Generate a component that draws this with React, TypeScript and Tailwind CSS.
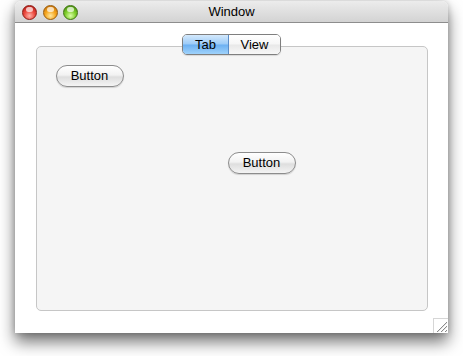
import React from 'react';

const font = { fontFamily: '"Liberation Sans", Arial, sans-serif' };

function Light({ tone }: { tone: 'red' | 'amber' | 'green' }) {
  const fills = {
    red: 'bg-[radial-gradient(circle_at_50%_75%,#ffb4aa_0%,#ec4a40_45%,#a8120c_100%)] border-[#8e1a14]',
    amber: 'bg-[radial-gradient(circle_at_50%_75%,#ffe8a0_0%,#f6a61e_45%,#b86406_100%)] border-[#9a5c0a]',
    green: 'bg-[radial-gradient(circle_at_50%_75%,#dcffa8_0%,#80ce2c_45%,#3a7e08_100%)] border-[#3f7410]',
  };
  return (
    <div className={`relative h-[15px] w-[15px] rounded-full border ${fills[tone]}`}>
      <div className="absolute left-[3px] top-[1px] h-[5px] w-[7px] rounded-full bg-white/70" />
    </div>
  );
}

function AquaButton({ className = '' }: { className?: string }) {
  return (
    <div
      className={`flex h-[22px] w-[68px] items-center justify-center rounded-full border border-[#8c8c8c] bg-[linear-gradient(to_bottom,#ffffff_0%,#f2f2f2_45%,#dedede_55%,#f4f4f4_100%)] text-[13px] text-black shadow-[0_1px_1px_rgba(0,0,0,0.15)] ${className}`}
    >
      Button
    </div>
  );
}

export default function App() {
  return (
    <div className="h-[356px] w-[463px] bg-white pl-[15px] pt-[1px]" style={font}>
      <div className="relative flex h-[332px] w-[433px] flex-col rounded-t-[6px] bg-white shadow-[0_9px_16px_rgba(0,0,0,0.55),0_0_6px_rgba(0,0,0,0.2)]">
        <div className="relative flex h-[22px] items-center rounded-t-[6px] border-b border-[#8d8d8d] bg-[linear-gradient(to_bottom,#ececec,#d3d3d3)]">
          <div className="flex items-center gap-[5.5px] pl-[7px] pt-[1px]">
            <Light tone="red" />
            <Light tone="amber" />
            <Light tone="green" />
          </div>
          <div className="absolute inset-0 flex items-center justify-center pt-[1px] text-[13px] text-black">Window</div>
        </div>

        <div className="flex flex-1 flex-col items-center pt-[11px]">
          <div className="relative z-10 flex h-[21px] w-[99px] overflow-hidden rounded-[5px] border border-[#7f7f7f] text-[13px] text-black shadow-[0_1px_1px_rgba(0,0,0,0.12)]">
            <div className="flex w-[46px] items-center justify-center border-r border-[#5a8cc8] bg-[linear-gradient(to_bottom,#d4e9fc_0%,#9ccbf8_48%,#6cb0f2_52%,#9fd2fb_100%)]">
              Tab
            </div>
            <div className="flex flex-1 items-center justify-center bg-[linear-gradient(to_bottom,#ffffff_0%,#f6f6f6_48%,#e8e8e8_52%,#f7f7f7_100%)]">
              View
            </div>
          </div>
          <div className="-mt-[9px] flex h-[265px] w-[392px] flex-col items-start rounded-[5px] border border-[#c6c6c6] bg-[#f5f5f5]">
            <AquaButton className="ml-[19px] mt-[18px]" />
            <AquaButton className="ml-[191px] mt-[65px]" />
          </div>
        </div>

        <div className="absolute bottom-0 right-0 h-[15px] w-[15px] border-l border-t border-[#d6d6d6] bg-white">
          <svg width="14" height="14" viewBox="0 0 14 14" className="absolute left-0 top-0">
            <path d="M3 13 L13 3 M7 13 L13 7 M11 13 L13 11" stroke="#8a8a8a" strokeWidth="1" />
            <path d="M4 13 L13 4 M8 13 L13 8 M12 13 L13 12" stroke="#e8e8e8" strokeWidth="1" />
          </svg>
        </div>
      </div>
    </div>
  );
}
